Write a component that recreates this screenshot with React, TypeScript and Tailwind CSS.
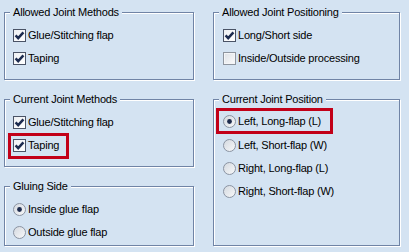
import type { ReactNode } from 'react';

const font = { fontFamily: '"Liberation Sans", Arial, sans-serif' };

function CheckBox({ checked }: { checked: boolean }) {
  if (!checked) {
    return (
      <span className="w-[13px] h-[13px] shrink-0 border border-[#8e959f] bg-gradient-to-br from-[#dde1e6] to-[#fbfbfc] shadow-[inset_0_0_0_1px_#f4f5f7]" />
    );
  }
  return (
    <span className="w-[13px] h-[13px] shrink-0 border border-[#4a5366] bg-gradient-to-br from-[#eef0f3] to-white flex items-center justify-center">
      <svg width="11" height="11" viewBox="0 0 11 11">
        <path d="M1.6 5.4 L4.2 8.2 L9.4 2.4" fill="none" stroke="#1c2b4f" strokeWidth="2.5" />
      </svg>
    </span>
  );
}

function Radio({ checked }: { checked: boolean }) {
  return (
    <svg width="13" height="13" viewBox="0 0 13 13" className="shrink-0">
      <defs>
        <linearGradient id="rg" x1="0" y1="0" x2="1" y2="1">
          <stop offset="0" stopColor="#d3d8df" />
          <stop offset="1" stopColor="#f8f9fa" />
        </linearGradient>
      </defs>
      <circle cx="6.5" cy="6.5" r="6" fill="url(#rg)" stroke="#8a93a2" strokeWidth="1" />
      {checked && <circle cx="6.5" cy="6.5" r="2.4" fill="#1c2b4d" />}
    </svg>
  );
}

function Row({ children, highlight, pad }: { children: ReactNode; highlight?: boolean; pad?: string }) {
  return (
    <div className="h-[23px] flex items-center">
      {highlight ? (
        <span className={`inline-flex items-center gap-[2px] h-[20px] ring-[3px] ring-[#c20018] ${pad}`}>
          {children}
        </span>
      ) : (
        <span className="inline-flex items-center gap-[2px]">{children}</span>
      )}
    </div>
  );
}

function Group({
  title,
  children,
  className,
}: {
  title: string;
  children: ReactNode;
  className: string;
}) {
  return (
    <div
      className={`relative border border-[#7084a6] shadow-[inset_1px_1px_0_#ffffff,1px_1px_0_#ffffff] pt-[11px] ${className}`}
    >
      <span className="absolute -top-[7px] left-[5px] px-[3px] h-[13px] leading-[13px] bg-[#d4e3f2]">
        {title}
      </span>
      {children}
    </div>
  );
}

export default function App() {
  return (
    <div
      className="w-[409px] h-[252px] bg-[#d4e3f2] text-[11px] leading-[13px] tracking-[-0.2px] text-black pl-[4px] pt-[12px] flex gap-[19px]"
      style={font}
    >
      <div className="w-[190px] flex flex-col gap-[19px]">
        <Group title="Allowed Joint Methods" className="h-[68px] pl-[8px]">
          <Row>
            <CheckBox checked />
            <span>Glue/Stitching flap</span>
          </Row>
          <Row>
            <CheckBox checked />
            <span>Taping</span>
          </Row>
        </Group>
        <Group title="Current Joint Methods" className="h-[68px] pl-[8px]">
          <Row>
            <CheckBox checked />
            <span>Glue/Stitching flap</span>
          </Row>
          <Row highlight pad="-ml-[2px] pl-[2px] pr-[7px]">
            <CheckBox checked />
            <span>Taping</span>
          </Row>
        </Group>
        <Group title="Gluing Side" className="h-[60px] pl-[8px]">
          <Row>
            <Radio checked />
            <span>Inside glue flap</span>
          </Row>
          <Row>
            <Radio checked={false} />
            <span>Outside glue flap</span>
          </Row>
        </Group>
      </div>
      <div className="w-[187px] flex flex-col gap-[19px]">
        <Group title="Allowed Joint Positioning" className="h-[68px] pl-[9px]">
          <Row>
            <CheckBox checked />
            <span>Long/Short side</span>
          </Row>
          <Row>
            <CheckBox checked={false} />
            <span>Inside/Outside processing</span>
          </Row>
        </Group>
        <Group title="Current Joint Position" className="h-[147px] pl-[9px]">
          <Row highlight pad="-ml-[4px] pl-[4px] pr-[9px] -mt-[3px]">
            <Radio checked />
            <span>Left, Long-flap (L)</span>
          </Row>
          <Row>
            <Radio checked={false} />
            <span>Left, Short-flap (W)</span>
          </Row>
          <Row>
            <Radio checked={false} />
            <span>Right, Long-flap (L)</span>
          </Row>
          <Row>
            <Radio checked={false} />
            <span>Right, Short-flap (W)</span>
          </Row>
        </Group>
      </div>
    </div>
  );
}
